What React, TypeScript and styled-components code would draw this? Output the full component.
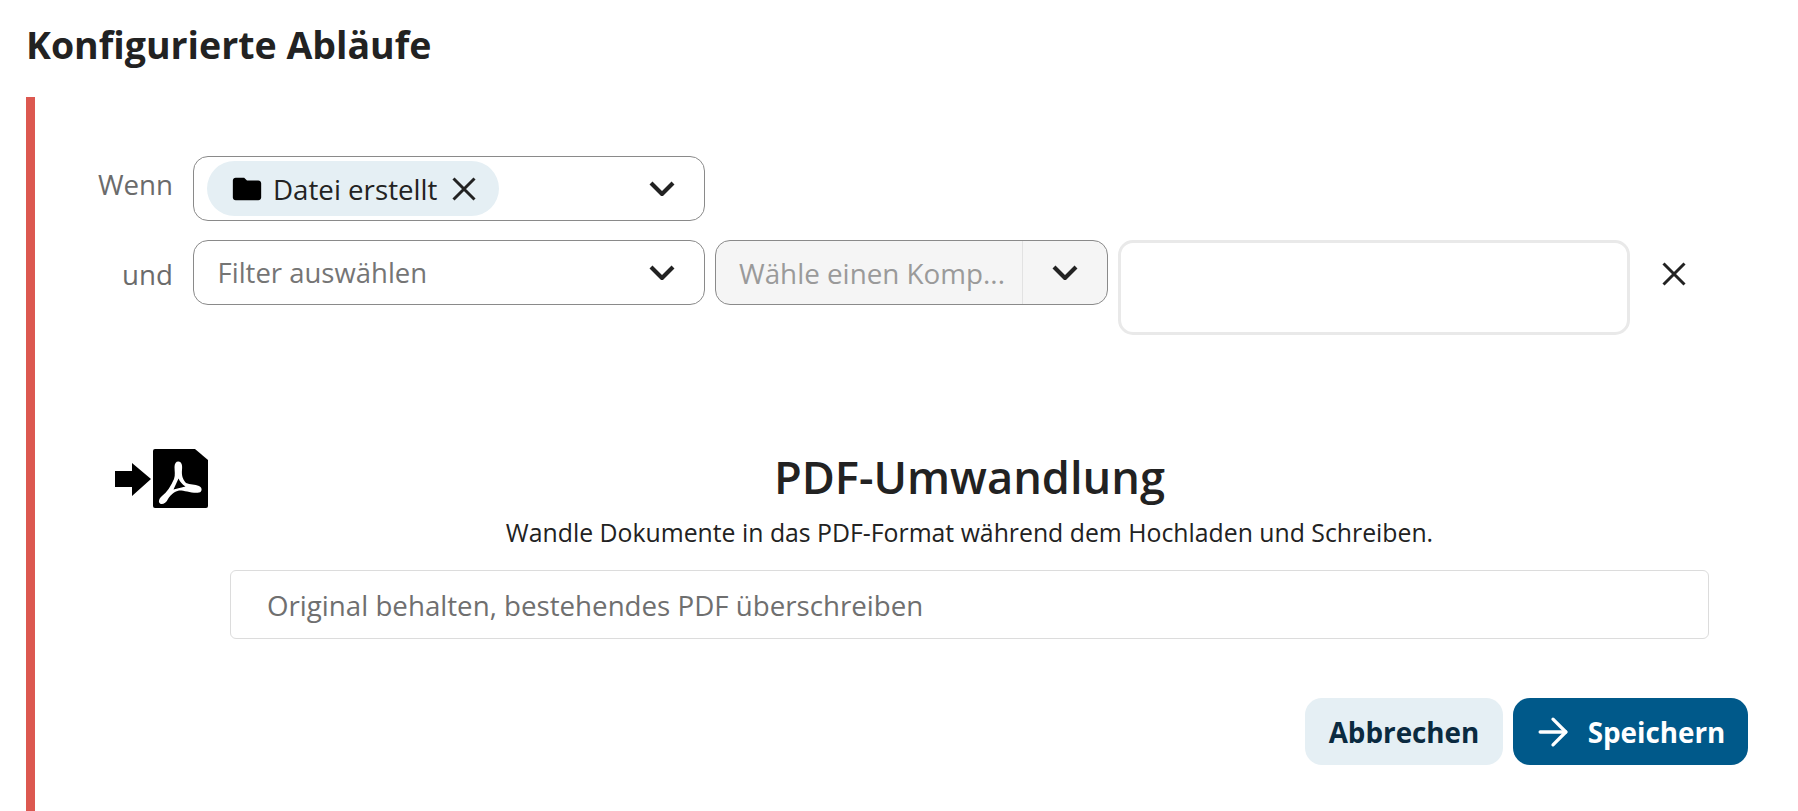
import { createGlobalStyle, styled } from 'styled-components';
import { ArrowRight } from 'lucide-react';

const GlobalStyle = createGlobalStyle`
  html, body {
    margin: 0;
    padding: 0;
    background: #fff;
    overflow: hidden;
  }
  body {
    font-family: 'Open Sans', 'Noto Sans', sans-serif;
    color: #222;
  }
`;

const Page = styled.div`
  width: 1798px;
  height: 811px;
  padding: 20px 0 0 26px;
  box-sizing: border-box;
  overflow: hidden;
`;

const Title = styled.h2`
  margin: 0 0 25px;
  font-size: 37.5px;
  line-height: 50px;
  padding-bottom: 2px;
  font-weight: 700;
  color: #222;
`;

const Card = styled.div`
  border-left: 9px solid #dc5850;
  min-height: 714px;
  padding: 59px 50px 0 0;
  box-sizing: border-box;
`;

const Rows = styled.div`
  display: flex;
  flex-direction: column;
  gap: 19px;
`;

const Row = styled.div`
  display: flex;
  align-items: flex-start;
`;

const Label = styled.label<{ $lineHeight: number }>`
  width: 138px;
  margin-right: 20px;
  text-align: right;
  font-size: 27.7px;
  line-height: ${(p) => p.$lineHeight}px;
  color: #6b6b6b;
`;

const Select = styled.div<{ $width: number; $disabled?: boolean }>`
  width: ${(p) => p.$width}px;
  height: 65px;
  box-sizing: border-box;
  display: flex;
  align-items: center;
  border: 1.5px solid #8a8a8a;
  border-radius: 15px;
  background: ${(p) => (p.$disabled ? '#f5f5f5' : '#fff')};
`;

const SelectValue = styled.div`
  flex: 1;
  min-width: 0;
  display: flex;
  align-items: center;
  padding-left: 13px;
`;

const Placeholder = styled.span<{ $disabled?: boolean }>`
  padding-left: ${(p) => (p.$disabled ? 10 : 10.5)}px;
  font-size: ${(p) => (p.$disabled ? 27.8 : 27.5)}px;
  white-space: nowrap;
  color: ${(p) => (p.$disabled ? '#9a9a9a' : '#757575')};
`;

const Chip = styled.div`
  width: 292px;
  height: 55px;
  box-sizing: border-box;
  display: flex;
  align-items: center;
  padding-left: 23px;
  border-radius: 28px;
  background: #e5eff4;
  font-size: 27.7px;
  color: #222;
`;

const ChipText = styled.span`
  margin: 0 15px 0 9px;
  white-space: nowrap;
`;

const Caret = styled.div<{ $divided?: boolean }>`
  width: ${(p) => (p.$divided ? 85 : 55)}px;
  align-self: stretch;
  flex-shrink: 0;
  display: flex;
  align-items: center;
  justify-content: ${(p) => (p.$divided ? 'center' : 'flex-start')};
  box-sizing: border-box;
  border-left: ${(p) => (p.$divided ? '1px solid #e2e2e2' : 'none')};
`;

const Gap = styled.div<{ $size: number }>`
  width: ${(p) => p.$size}px;
  flex-shrink: 0;
`;

const ValueArea = styled.textarea`
  width: 512px;
  height: 95px;
  box-sizing: border-box;
  border: 3px solid #e9e9e9;
  border-radius: 15px;
  background: #fff;
  resize: none;
  outline: none;
`;

const CloseButton = styled.button`
  margin: 22px 0 0 32px;
  padding: 0;
  border: 0;
  background: none;
  display: flex;
`;

const Operation = styled.div`
  display: flex;
  align-items: flex-start;
  margin: 114px 39px 0 80px;
`;

const OperationIcon = styled.svg`
  width: 93px;
  height: 59px;
  flex-shrink: 0;
  margin-right: 22px;
`;

const OperationBody = styled.div`
  flex: 1;
  min-width: 0;
  text-align: center;
`;

const Heading = styled.h3`
  margin: 0;
  font-size: 45.2px;
  line-height: 56px;
  font-weight: 600;
  color: #222;
`;

const Description = styled.p`
  margin: 10px 0 21px;
  font-size: 24.8px;
  line-height: 34px;
  color: #222;
`;

const OptionInput = styled.input`
  display: block;
  width: 100%;
  height: 69px;
  box-sizing: border-box;
  padding: 0 36px;
  border: 1.5px solid #dcdcdc;
  border-radius: 6px;
  font-family: inherit;
  font-size: 27.7px;
  background: #fff;
  outline: none;

  &::placeholder {
    color: #6f6f6f;
    opacity: 1;
  }
`;

const Actions = styled.div`
  display: flex;
  justify-content: flex-end;
  gap: 10px;
  margin-top: 59px;
`;

const Button = styled.button<{ $primary?: boolean }>`
  height: 67px;
  box-sizing: border-box;
  display: flex;
  align-items: center;
  justify-content: center;
  gap: ${(p) => (p.$primary ? 13 : 0)}px;
  width: ${(p) => (p.$primary ? 235 : 198)}px;
  padding: 0 ${(p) => (p.$primary ? '5px' : '0')} 0 0;
  border: 0;
  border-radius: 17px;
  font-family: inherit;
  font-size: 27.8px;
  font-weight: 700;
  background: ${(p) => (p.$primary ? '#00598a' : '#e5eff4')};
  color: ${(p) => (p.$primary ? '#fff' : '#0a2a40')};
`;

function Chevron() {
  return (
    <svg width="26" height="15" viewBox="0 0 26 15" fill="none">
      <path d="M2 2l11 11L24 2" stroke="#222" strokeWidth="4.2" />
    </svg>
  );
}

function Cross() {
  return (
    <svg width="24" height="24" viewBox="0 0 24 24" fill="none">
      <path d="M1.500 1.500l21 21M22.500 1.500l-21 21" stroke="#222" strokeWidth="3" />
    </svg>
  );
}

function FolderIcon() {
  return (
    <svg width="34" height="34" viewBox="0 0 24 24" fill="#000">
      <path d="M10 4H4c-1.1 0-1.99.9-1.99 2L2 18c0 1.1.9 2 2 2h16c1.1 0 2-.9 2-2V8c0-1.1-.9-2-2-2h-8l-2-2z" />
    </svg>
  );
}

export default function App() {
  return (
    <>
      <GlobalStyle />
      <Page>
        <Title>Konfigurierte Abläufe</Title>
        <Card>
          <Rows>
            <Row>
              <Label $lineHeight={57}>Wenn</Label>
              <Select $width={512}>
                <SelectValue>
                  <Chip>
                    <FolderIcon />
                    <ChipText>Datei erstellt</ChipText>
                    <Cross />
                  </Chip>
                </SelectValue>
                <Caret>
                  <Chevron />
                </Caret>
              </Select>
            </Row>
            <Row>
              <Label $lineHeight={69}>und</Label>
              <Select $width={512}>
                <SelectValue>
                  <Placeholder>Filter auswählen</Placeholder>
                </SelectValue>
                <Caret>
                  <Chevron />
                </Caret>
              </Select>
              <Gap $size={10} />
              <Select $width={393} $disabled>
                <SelectValue>
                  <Placeholder $disabled>Wähle einen Komp...</Placeholder>
                </SelectValue>
                <Caret $divided>
                  <Chevron />
                </Caret>
              </Select>
              <Gap $size={10} />
              <ValueArea />
              <CloseButton>
                <Cross />
              </CloseButton>
            </Row>
          </Rows>
          <Operation>
            <OperationIcon viewBox="0 0 93 59">
              <path d="M0 22h17v-8l19 16-19 17v-9H0z" fill="#000" />
              <path d="M40 0h40l13 11v46a2 2 0 0 1-2 2H40a2 2 0 0 1-2-2V2a2 2 0 0 1 2-2z" fill="#000" />
              <path
                fillRule="evenodd"
                fill="#fff"
                d="M63.300 12.500C67 12.500 67.500 17 67 21C66.500 26 67.500 30 71 34C75 35.500 80 35.500 84 37C87.500 38.500 87.500 43 84 43.500C77 44.500 68 41 64 41.500C60 42.500 56 45 53 50C51 54.500 47 56 45 54.500C43 53 44 49.500 47 47C52 43 56 37 59 30C60.500 26 59.500 22 59.500 18C59.500 14.500 61 12.500 63.300 12.500ZM63.500 29.500L58.500 40.500L70.500 37.500C67.500 35.500 65 33 63.500 29.500Z"
              />
            </OperationIcon>
            <OperationBody>
              <Heading>PDF-Umwandlung</Heading>
              <Description>Wandle Dokumente in das PDF-Format während dem Hochladen und Schreiben.</Description>
              <OptionInput placeholder="Original behalten, bestehendes PDF überschreiben" />
            </OperationBody>
          </Operation>
          <Actions>
            <Button>Abbrechen</Button>
            <Button $primary>
              <ArrowRight size={44} strokeWidth={1.8} />
              Speichern
            </Button>
          </Actions>
        </Card>
      </Page>
    </>
  );
}
